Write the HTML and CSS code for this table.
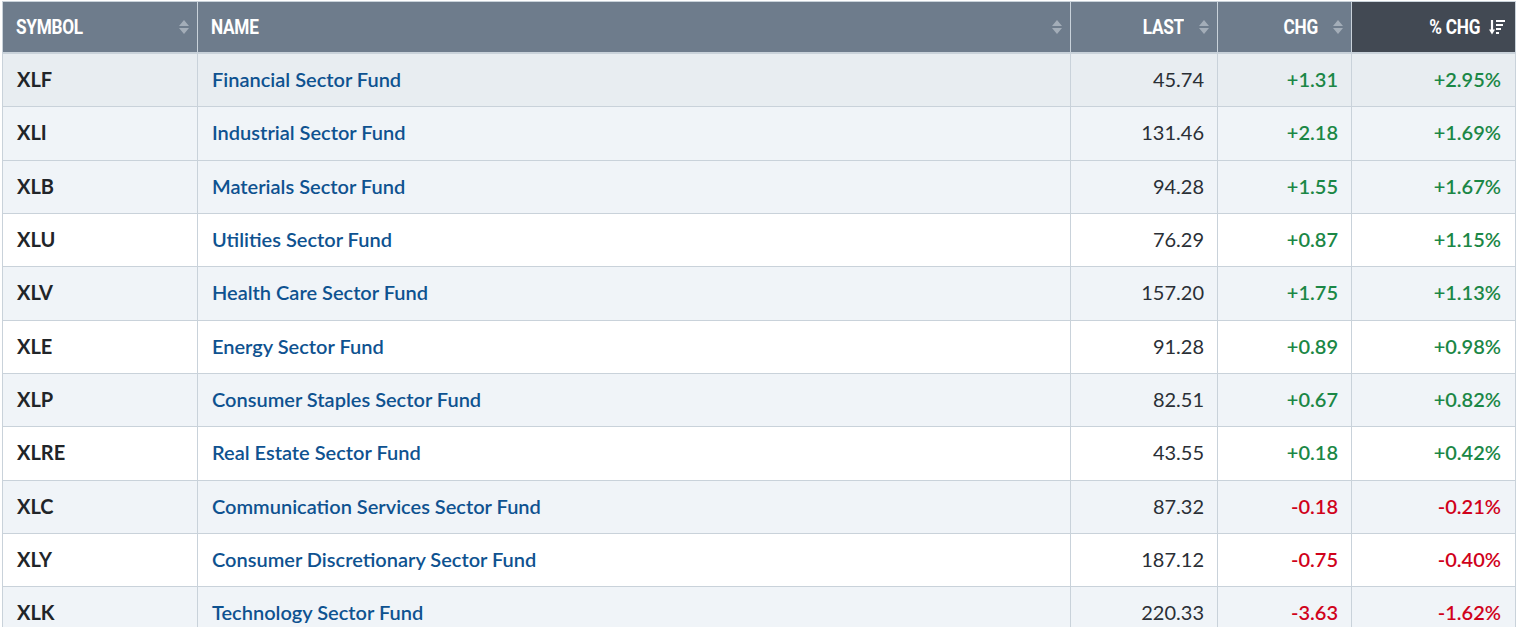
FILE: index.html
```html
<!DOCTYPE html>
<html>
<head>
<meta charset="utf-8">
<link rel="stylesheet" href="styles.css">
</head>
<body>
<div class="wrap">
<table class="quotes">
  <colgroup>
    <col class="c-sym"><col class="c-name"><col class="c-last"><col class="c-chg"><col class="c-pct">
  </colgroup>
  <thead>
    <tr>
      <th class="left"><div class="th-in"><span class="lbl">SYMBOL</span><svg class="sort" viewBox="0 0 10 14"><path d="M5 0 10 6H0z M0 8h10L5 14z"/></svg></div></th>
      <th class="left"><div class="th-in"><span class="lbl">NAME</span><svg class="sort" viewBox="0 0 10 14"><path d="M5 0 10 6H0z M0 8h10L5 14z"/></svg></div></th>
      <th class="right"><div class="th-in"><span class="lbl">LAST</span><svg class="sort" viewBox="0 0 10 14"><path d="M5 0 10 6H0z M0 8h10L5 14z"/></svg></div></th>
      <th class="right"><div class="th-in"><span class="lbl">CHG</span><svg class="sort" viewBox="0 0 10 14"><path d="M5 0 10 6H0z M0 8h10L5 14z"/></svg></div></th>
      <th class="right active"><div class="th-in"><span class="lbl">% CHG</span><svg class="sort-active" viewBox="0 0 16 16"><path d="M3 1v11" stroke="#fff" stroke-width="2.2" fill="none"/><path d="M0 10.5h6L3 15.5z" fill="#fff"/><path d="M7 2h9M7 6h7M7 10h5M7 14h3" stroke="#fff" stroke-width="2" fill="none"/></svg></div></th>
    </tr>
  </thead>
  <tbody>
    <tr class="hover"><td class="sym">XLF</td><td class="name">Financial Sector Fund</td><td class="num">45.74</td><td class="num up">+1.31</td><td class="num up">+2.95%</td></tr>
    <tr class="alt"><td class="sym">XLI</td><td class="name">Industrial Sector Fund</td><td class="num">131.46</td><td class="num up">+2.18</td><td class="num up">+1.69%</td></tr>
    <tr class="alt"><td class="sym">XLB</td><td class="name">Materials Sector Fund</td><td class="num">94.28</td><td class="num up">+1.55</td><td class="num up">+1.67%</td></tr>
    <tr><td class="sym">XLU</td><td class="name">Utilities Sector Fund</td><td class="num">76.29</td><td class="num up">+0.87</td><td class="num up">+1.15%</td></tr>
    <tr class="alt"><td class="sym">XLV</td><td class="name">Health Care Sector Fund</td><td class="num">157.20</td><td class="num up">+1.75</td><td class="num up">+1.13%</td></tr>
    <tr><td class="sym">XLE</td><td class="name">Energy Sector Fund</td><td class="num">91.28</td><td class="num up">+0.89</td><td class="num up">+0.98%</td></tr>
    <tr class="alt"><td class="sym">XLP</td><td class="name">Consumer Staples Sector Fund</td><td class="num">82.51</td><td class="num up">+0.67</td><td class="num up">+0.82%</td></tr>
    <tr><td class="sym">XLRE</td><td class="name">Real Estate Sector Fund</td><td class="num">43.55</td><td class="num up">+0.18</td><td class="num up">+0.42%</td></tr>
    <tr class="alt"><td class="sym">XLC</td><td class="name">Communication Services Sector Fund</td><td class="num">87.32</td><td class="num down">-0.18</td><td class="num down">-0.21%</td></tr>
    <tr><td class="sym">XLY</td><td class="name">Consumer Discretionary Sector Fund</td><td class="num">187.12</td><td class="num down">-0.75</td><td class="num down">-0.40%</td></tr>
    <tr class="alt"><td class="sym">XLK</td><td class="name">Technology Sector Fund</td><td class="num">220.33</td><td class="num down">-3.63</td><td class="num down">-1.62%</td></tr>
  </tbody>
</table>
</div>
</body>
</html>
```
FILE: styles.css
```css
html, body {
  margin: 0;
  padding: 0;
  background: #ffffff;
  overflow: hidden;
}
.wrap {
  padding: 1px 0 0 2px;
  width: 1513px;
}
.quotes {
  width: 1513px;
  border-collapse: collapse;
  table-layout: fixed;
  font-family: Lato, "Open Sans", sans-serif;
}
.c-sym { width: 195px; }
.c-name { width: 873px; }
.c-last { width: 147px; }
.c-chg { width: 134px; }
.c-pct { width: 164px; }

.quotes th {
  background: #6e7c8c;
  color: #ffffff;
  height: 50px;
  padding: 0 8px 0 13px;
  border: 1px solid #c9d2da;
  border-bottom: 2px solid #c9d2da;
  font-family: Roboto, "Liberation Sans", sans-serif;
  font-weight: 700;
  font-size: 20px;
  letter-spacing: -0.3px;
}
.quotes th.active {
  background: #424953;
  padding-right: 10px;
}
.th-in {
  display: flex;
  align-items: center;
}
th.left .th-in { justify-content: space-between; }
th.right .th-in { justify-content: flex-end; gap: 15px; }
th.active .th-in { gap: 9px; }
.lbl { transform: scaleX(0.86); transform-origin: left center; display: inline-block; }
th.right .lbl { transform-origin: right center; }
.sort {
  width: 10px;
  height: 14px;
  fill: #a3adb8;
  flex: none;
}
.sort-active {
  width: 16px;
  height: 16px;
  flex: none;
}

.quotes td {
  height: 50.33px;
  padding: 0 13px 2px 14px;
  border: 1px solid #c9d2da;
  font-size: 20px;
  white-space: nowrap;
}
.quotes tr.alt td { background: #f0f4f8; }
.quotes tr.hover td { background: #e8edf1; }
.sym {
  color: #212529;
  font-weight: 700;
}
.name {
  color: #0e5290;
  font-weight: 600;
}
.num {
  text-align: right;
  color: #2a2f36;
  font-weight: 400;
}
.quotes td:last-child { padding-right: 14px; }
.up { color: #1b8746 !important; font-weight: 600; }
.down { color: #d0021b !important; font-weight: 600; }
```
